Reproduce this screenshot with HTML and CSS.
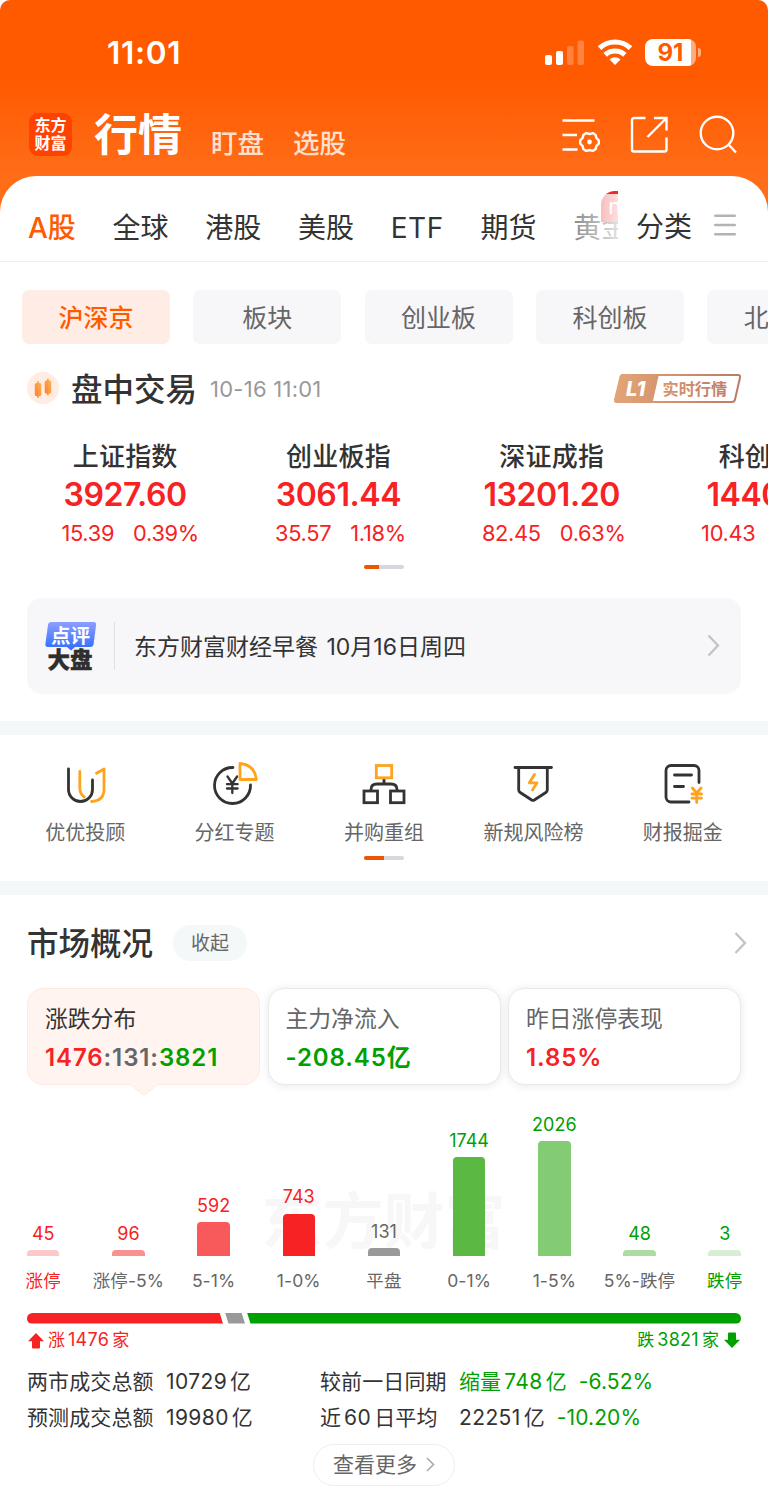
FILE: index.html
```html
<!DOCTYPE html>
<html lang="zh-CN">
<head>
  <meta charset="UTF-8">
  <meta name="viewport" content="width=device-width, initial-scale=1.0">
  <title>行情</title>
  <link rel="stylesheet" href="styles.css">
</head>
<body>
  <header class="header">
    <div class="status-bar">
      <span class="time">11:01</span>
      <div class="status-icons">
        <svg class="signal" width="39" height="25" viewBox="0 0 39 25" fill="#fff">
          <rect x="0" y="15" width="7" height="10" rx="2"/>
          <rect x="11" y="11" width="7" height="14" rx="2"/>
          <rect x="22" y="6" width="6.500" height="19" rx="2" opacity=".25"/>
          <rect x="32.500" y="0.500" width="6.500" height="24.500" rx="2" opacity=".25"/>
        </svg>
        <svg class="wifi" width="34" height="26" viewBox="0 0 34 26" fill="none" stroke="#fff" stroke-width="5.200">
          <path d="M1.500 9.200a22.500 22.500 0 0 1 31 0"/>
          <path d="M7.200 15.800a14.500 14.500 0 0 1 19.600 0"/>
          <path d="M11.500 20.600a7.600 7.600 0 0 1 11 0L17 26z" fill="#fff" stroke="none"/>
        </svg>
        <div class="battery"><span>91</span></div>
      </div>
    </div>
    <div class="nav-bar">
      <div class="logo">东方<br>财富</div>
      <h1 class="nav-title">行情</h1>
      <a class="nav-link">盯盘</a>
      <a class="nav-link">选股</a>
      <div class="nav-icons">
        <svg width="38" height="38" viewBox="0 0 38 38" fill="none" stroke="#fff" stroke-width="2.400">
          <path d="M.5 4.500h32M.5 19H15M.5 33.500h15"/>
          <path stroke-linejoin="round" transform="translate(27.500 26)" d="M9.300 -1.600V1.600L6.900 4L6.100 7.100L3.300 8.900L0 8L-3.300 8.900L-6.100 7.100L-6.900 4L-9.300 1.600V-1.600L-6.900 -4L-6.100 -7.100L-3.300 -8.900L0 -8L3.300 -8.900L6.100 -7.100L6.900 -4Z"/>
          <circle cx="27.500" cy="26" r="2.400" fill="#fff" stroke="none"/>
        </svg>
        <svg width="38" height="38" viewBox="0 0 38 38" fill="none" stroke="#fff" stroke-width="2.400">
          <path d="M15.500 2H4a2 2 0 0 0-2 2V33.500a2 2 0 0 0 2 2H34.500a2 2 0 0 0 2-2V21.500"/>
          <path d="M24 2h12.500V14.500M36.500 2L17.500 21"/>
        </svg>
        <svg width="40" height="40" viewBox="0 0 40 40" fill="none" stroke="#fff" stroke-width="2.400">
          <circle cx="19" cy="18" r="16.300"/>
          <path d="M30.500 29.500L38 37.500"/>
        </svg>
      </div>
    </div>
  </header>

  <main class="sheet">
    <nav class="tabs">
      <div class="tab-strip">
        <a class="tab active">A股</a>
        <a class="tab">全球</a>
        <a class="tab">港股</a>
        <a class="tab">美股</a>
        <a class="tab etf">ETF</a>
        <a class="tab">期货</a>
        <a class="tab">黄金<i class="new">new</i></a>
      </div>
      <a class="category">分类</a>
      <svg class="menu" width="22" height="22" viewBox="0 0 22 22" stroke="#b3b3b3" stroke-width="2.400" stroke-linecap="round">
        <path d="M1.200 1.800h19.600M1.200 11h19.600M1.200 20.200h19.600"/>
      </svg>
    </nav>

    <div class="chips">
      <a class="chip on">沪深京</a>
      <a class="chip">板块</a>
      <a class="chip">创业板</a>
      <a class="chip">科创板</a>
      <a class="chip">北交所</a>
    </div>

    <div class="session">
      <svg width="32" height="32" viewBox="0 0 32 32">
        <defs>
          <linearGradient id="candle" x1="0" y1="1" x2="1" y2="0">
            <stop offset="0" stop-color="#ff7f3a"/>
            <stop offset="1" stop-color="#ffb34d"/>
          </linearGradient>
        </defs>
        <circle cx="16" cy="16" r="16" fill="#ffece3"/>
        <g fill="url(#candle)">
          <rect x="7.800" y="11" width="6.500" height="13" rx="1.500"/>
          <rect x="10.200" y="9" width="1.800" height="17" rx=".9"/>
          <rect x="17.700" y="8.500" width="6.500" height="13" rx="1.500"/>
          <rect x="20.100" y="6.500" width="1.800" height="17" rx=".9"/>
        </g>
      </svg>
      <h2>盘中交易</h2>
      <time>10-16 11:01</time>
      <svg class="level" width="127" height="29" viewBox="0 0 127 29">
        <defs>
          <linearGradient id="bronze" gradientUnits="userSpaceOnUse" x1="0" y1="0" x2="127" y2="0">
            <stop offset="0" stop-color="#e3a577"/>
            <stop offset="1" stop-color="#bd7a63"/>
          </linearGradient>
        </defs>
        <path d="M9.500 1H124q2.600 0 2 2.500l-5 22q-.6 2.500-3 2.500H3q-2.600 0-2-2.500l5.500-22Q7 1 9.500 1z" fill="#fff" stroke="url(#bronze)" stroke-width="2"/>
        <path d="M9 0H45L38.500 29H3Q0 29 .6 26L5.500 3Q6.300 0 9 0z" fill="url(#bronze)"/>
        <text class="level-no" x="12" y="21.500">L1</text>
        <text class="level-text" x="48.500" y="20.500" fill="url(#bronze)">实时行情</text>
      </svg>
    </div>

    <div class="indices">
      <div class="index">
        <h3>上证指数</h3>
        <strong>3927.60</strong>
        <p><span>15.39</span><span>0.39%</span></p>
      </div>
      <div class="index">
        <h3>创业板指</h3>
        <strong>3061.44</strong>
        <p><span>35.57</span><span>1.18%</span></p>
      </div>
      <div class="index">
        <h3>深证成指</h3>
        <strong>13201.20</strong>
        <p><span>82.45</span><span>0.63%</span></p>
      </div>
      <div class="index">
        <h3>科创 50</h3>
        <strong>1440.21</strong>
        <p><span>10.43</span><span>0.73%</span></p>
      </div>
    </div>
    <div class="pager index-pager"><i></i></div>

    <div class="comment">
      <svg width="52" height="50" viewBox="0 0 52 50">
        <defs>
          <linearGradient id="bubble" x1="0" y1="0" x2="0" y2="1">
            <stop offset="0" stop-color="#8c9fff"/>
            <stop offset="1" stop-color="#2f6bff"/>
          </linearGradient>
        </defs>
        <path d="M6.500 1H48.500q3 0 2.600 3L48.600 23q-.4 3-3.400 3H30l-4 3.500L22 26H3q-3 0-2.600-3L3 4Q3.400 1 6.500 1z" fill="url(#bubble)"/>
        <text class="cm-top" x="6" y="21.500">点评</text>
        <text class="cm-bottom" x="2.500" y="47">大盘</text>
      </svg>
      <p>东方财富财经早餐 10月16日周四</p>
      <svg class="arrow" width="13" height="23" viewBox="0 0 13 23" fill="none" stroke="#c4c4c6" stroke-width="2.400">
        <path d="M1.500 1.500L11 11.500L1.500 21.500"/>
      </svg>
    </div>

    <div class="band"></div>

    <div class="shortcuts">
      <a class="shortcut">
        <svg width="48" height="48" viewBox="0 0 48 48">
          <path class="dk" d="M7.500 9v20.500a12 12 0 0 0 24 0V20"/>
          <path class="or" d="M18.800 11.500V28q0 6 4.500 9M35.500 13.300L43 9V29q0 12-12.500 12.500"/>
        </svg>
        优优投顾
      </a>
      <a class="shortcut">
        <svg width="48" height="48" viewBox="0 0 48 48">
          <path class="dk" d="M22 7.500a18 18 0 1 0 17.500 17.500"/>
          <path class="dk thin" d="M16.500 16.500l4.800 7 4.800-7M21.300 23.500V33M16 24.200h10.600M16 28.500h10.600"/>
          <path class="or" d="M29 3.500Q44 5 45.300 19.500H29z"/>
        </svg>
        分红专题
      </a>
      <a class="shortcut">
        <svg width="48" height="48" viewBox="0 0 48 48">
          <path class="dk" d="M24 18.500v5.500M11 30v-.5q0-5.500 6-5.500H31q6 0 6 5.500V30"/>
          <rect class="dk sq" x="4" y="31" width="13.500" height="11.700"/>
          <rect class="dk sq" x="30.500" y="31" width="13.500" height="11.700"/>
          <rect class="or sq" x="16.300" y="5.500" width="15.400" height="12.300"/>
        </svg>
        并购重组
      </a>
      <a class="shortcut">
        <svg width="48" height="48" viewBox="0 0 48 48">
          <path class="dk" d="M6 7.500h36.500M9.700 7.500V30q0 1.500 1.500 2.500l11.500 7.500q1.300.8 2.600 0l11.500-7.500q1.500-1 1.500-2.500V7.500"/>
          <path class="or" d="M25.500 14.500L20.300 22.800H28L23.500 30"/>
        </svg>
        新规风险榜
      </a>
      <a class="shortcut">
        <svg width="48" height="48" viewBox="0 0 48 48">
          <path class="dk" d="M40 22.500V10.500a5 5 0 0 0-5-5H12a5 5 0 0 0-5 5V37a5 5 0 0 0 5 5H30M15.500 15h17M15.500 26.500h9"/>
          <path class="or" d="M33.300 28l4.400 5 4.400-5M37.700 33v9.500M33 34h9.500M33 38.200h9.500"/>
        </svg>
        财报掘金
      </a>
    </div>
    <div class="pager shortcut-pager"><i></i></div>

    <div class="band"></div>

    <section class="market">
      <div class="market-head">
        <h2>市场概况</h2>
        <a class="fold">收起</a>
        <svg class="arrow" width="13" height="23" viewBox="0 0 13 23" fill="none" stroke="#c4c4c6" stroke-width="2.400">
          <path d="M1.500 1L11 11L1.500 21"/>
        </svg>
      </div>

      <div class="cards">
        <div class="card current">
          <h4>涨跌分布</h4>
          <p><b class="up">1476</b><b class="flat">:131:</b><b class="down">3821</b></p>
          <svg class="pointer" width="28" height="12" viewBox="0 0 28 12">
            <path d="M0 0L11.500 9.500Q14 11.500 16.500 9.500L28 0z" fill="#fff4f0"/>
            <path d="M1.200 1L11.500 9.500Q14 11.500 16.500 9.500L26.800 1" fill="none" stroke="#ffe8dd"/>
          </svg>
        </div>
        <div class="card">
          <h4>主力净流入</h4>
          <p class="down">-208.45亿</p>
        </div>
        <div class="card">
          <h4>昨日涨停表现</h4>
          <p class="up">1.85%</p>
        </div>
      </div>

      <div class="chart">
        <div class="watermark">东方财富</div>
        <div class="col up"><span>45</span><i class="bar r1" style="height:5.5px"></i></div>
        <div class="col up"><span>96</span><i class="bar r2" style="height:5.5px"></i></div>
        <div class="col up"><span>592</span><i class="bar r3" style="height:33.5px"></i></div>
        <div class="col up"><span>743</span><i class="bar r4" style="height:42px"></i></div>
        <div class="col flat"><span>131</span><i class="bar mid" style="height:7.5px"></i></div>
        <div class="col down"><span>1744</span><i class="bar g4" style="height:98.5px"></i></div>
        <div class="col down"><span>2026</span><i class="bar g3" style="height:114.5px"></i></div>
        <div class="col down"><span>48</span><i class="bar g2" style="height:5.5px"></i></div>
        <div class="col down"><span>3</span><i class="bar g1" style="height:5.5px"></i></div>
      </div>
      <div class="axis">
        <span class="up">涨停</span>
        <span>涨停-5%</span>
        <span>5-1%</span>
        <span>1-0%</span>
        <span>平盘</span>
        <span>0-1%</span>
        <span>1-5%</span>
        <span>5%-跌停</span>
        <span class="down">跌停</span>
      </div>

      <div class="ratio">
        <i class="ratio-up"></i>
        <i class="ratio-flat"></i>
        <i class="ratio-down"></i>
      </div>
      <div class="counts">
        <span class="up">
          <svg width="16" height="16" viewBox="0 0 16 16" fill="#f62223"><path d="M8 0l8 8.200h-4V14.500q0 1-1 1H5q-1 0-1-1V8.200H0z"/></svg>
          涨<em>1476</em>家
        </span>
        <span class="down">
          跌<em>3821</em>家
          <svg width="16" height="16" viewBox="0 0 16 16" fill="#00a000"><path d="M8 16l8-8.200h-4V1.500q0-1-1-1H5q-1 0-1 1v6.300H0z"/></svg>
        </span>
      </div>

      <div class="stats">
        <span>两市成交总额</span>
        <span><em>10729</em>亿</span>
        <span>较前一日同期</span>
        <span class="down">缩量<em class="mid-num">748</em>亿<b>-6.52%</b></span>
        <span>预测成交总额</span>
        <span><em>19980</em>亿</span>
        <span>近<em class="mid-num">60</em>日平均</span>
        <span><em>22251</em>亿<b class="down">-10.20%</b></span>
      </div>

      <a class="more">查看更多
        <svg width="9" height="15" viewBox="0 0 9 15" fill="none" stroke="#aaa" stroke-width="1.600"><path d="M1 1l6.500 6.500L1 14"/></svg>
      </a>
    </section>
  </main>
</body>
</html>
```

FILE: styles.css
```css
* {
  box-sizing: border-box;
  margin: 0;
  padding: 0;
}

body {
  width: 768px;
  height: 1488px;
  overflow: hidden;
  background: #fff;
  color: #333;
  font-family: Inter, "Noto Sans CJK SC", sans-serif;
}

h1, h2, h3, h4 {
  font-weight: 500;
}

i, em {
  font-style: normal;
}

svg {
  display: block;
  flex: none;
}

.up { color: #f62223; }
.down { color: #00a000; }
.flat { color: #666; }

/* header */
.header {
  height: 216px;
  border-radius: 10px 10px 0 0;
  background: linear-gradient(#ff5a00 78px, #ff6d19 175px);
  color: #fff;
}

.status-bar {
  display: flex;
  align-items: center;
  justify-content: space-between;
  height: 104px;
  padding: 0 67px 0 107px;
}

.time {
  font-size: 31.500px;
  font-weight: 600;
  letter-spacing: .7px;
}

.status-icons {
  display: flex;
  align-items: center;
}

.wifi {
  margin: 0 13px 0 14px;
}

.battery {
  position: relative;
  width: 51px;
  height: 27px;
  margin-right: 5px;
  border-radius: 8px;
  background: linear-gradient(90deg, #fff 46px, rgba(255, 255, 255, .5) 46px);
  color: #ff5a00;
  font-size: 24px;
  font-weight: 700;
  line-height: 27px;
  text-align: center;
}

.battery::after {
  content: "";
  position: absolute;
  left: 53px;
  top: 9px;
  width: 3px;
  height: 9px;
  border-radius: 0 3px 3px 0;
  background: rgba(255, 255, 255, .5);
}

.nav-bar {
  display: flex;
  align-items: center;
  height: 61px;
  padding: 0 30px 0 29px;
}

.logo {
  width: 43px;
  height: 43px;
  padding-top: 3px;
  border-radius: 9px;
  background: #ff4200;
  font-size: 16px;
  font-weight: 700;
  line-height: 18px;
  text-align: center;
}

.nav-title {
  margin: 0 29px 0 22px;
  font-size: 44px;
  font-weight: 600;
  line-height: 60px;
}

.nav-link {
  margin: 17px 29px 0 0;
  color: #ffe0cf;
  font-size: 26.500px;
  font-weight: 500;
  line-height: 36px;
}

.nav-icons {
  display: flex;
  align-items: center;
  gap: 30px;
  margin-left: auto;
}

/* sheet */
.sheet {
  height: 1313px;
  margin-top: -40.500px;
  position: relative;
  border-radius: 36px 36px 0 0;
  background: #fff;
}

.tabs {
  display: flex;
  align-items: center;
  height: 86.500px;
  border-bottom: 1.500px solid #eee;
  font-size: 28px;
  line-height: 40px;
}

.tab-strip {
  position: relative;
  display: flex;
  gap: 36.700px;
  width: 618px;
  height: 85px;
  padding: 32px 0 0 28px;
  overflow: hidden;
  white-space: nowrap;
}

.tab-strip::after {
  content: "";
  position: absolute;
  left: 560px;
  top: 18px;
  width: 58px;
  height: 66px;
  background: linear-gradient(90deg, rgba(255, 255, 255, .3), rgba(255, 255, 255, .85));
}

.tab {
  position: relative;
  flex: none;
}

.tab.etf {
  letter-spacing: .6px;
}

.tab.active {
  color: #ff5a00;
  font-weight: 500;
}

.tab.active::after {
  content: "";
  position: absolute;
  left: 12px;
  bottom: -14px;
  width: 25px;
  height: 4px;
  border-radius: 2px;
  background: #ff5a00;
}

.new {
  position: absolute;
  left: 28px;
  top: -17px;
  width: 50px;
  height: 31px;
  padding-left: 7px;
  border-radius: 14px 14px 14px 0;
  background: #ee2a2a;
  color: #fff;
  font-size: 22px;
  line-height: 30px;
}

.category {
  margin: 18px 22px 0 18px;
}

.menu {
  margin-top: 14px;
}

.chips {
  display: flex;
  gap: 23.300px;
  margin: 28px 0 0 22px;
  overflow: hidden;
}

.chip {
  flex: none;
  width: 148px;
  height: 54px;
  border-radius: 7px;
  background: #f7f7fa;
  color: #666;
  font-size: 25px;
  line-height: 57px;
  text-align: center;
}

.chip.on {
  background: #ffede5;
  color: #ff5a00;
  font-weight: 500;
}

.session {
  display: flex;
  align-items: center;
  height: 40px;
  margin: 24px 27px 0;
}

.session h2 {
  margin: 0 13px 0 12px;
  padding-top: 3px;
  font-size: 31.500px;
  line-height: 40px;
}

.session time {
  padding-top: 1px;
  color: #999;
  font-size: 22px;
  letter-spacing: .25px;
}

.level {
  margin-left: auto;
}

.level-no {
  fill: #fff;
  font-size: 20px;
  font-weight: 800;
  font-style: italic;
}

.level-text {
  font-size: 16.200px;
  font-weight: 700;
}

.indices {
  display: flex;
  margin: 30px 0 0 18.500px;
  overflow: hidden;
}

.index {
  flex: none;
  width: 213.300px;
  text-align: center;
  color: #f62223;
}

.index h3 {
  color: #333;
  font-size: 26px;
  line-height: 38px;
  letter-spacing: .2px;
}

.index strong {
  display: block;
  font-size: 32px;
  font-weight: 600;
  line-height: 38px;
  letter-spacing: -.4px;
}

.index p {
  display: flex;
  justify-content: center;
  gap: 19px;
  margin-left: 4px;
  font-size: 21.800px;
  line-height: 39px;
  letter-spacing: -.3px;
}

.index:first-child p,
.index:last-child p {
  margin-left: 10px;
}

.pager {
  width: 40px;
  height: 4px;
  margin: 0 auto;
  border-radius: 2px;
  background: #d5d9dd;
  overflow: hidden;
}

.pager i {
  display: block;
  width: 15px;
  height: 4px;
  background: #ee5500;
}

.index-pager {
  margin-top: 12px;
}

.comment {
  display: flex;
  align-items: center;
  height: 96px;
  margin: 28.500px 27px 27px;
  padding: 0 21px 0 18px;
  border-radius: 15px;
  background: #f7f7fa;
}

.comment p {
  margin-left: 17px;
  padding: 2px 0 0 19px;
  border-left: 1.500px solid #e2e2e5;
  font-size: 23px;
  line-height: 46px;
  word-spacing: 2px;
}

.comment .arrow {
  margin-left: auto;
}

.cm-top {
  fill: #fff;
  font-size: 19.500px;
  font-weight: 700;
}

.cm-bottom {
  fill: #2e2e2e;
  stroke: #2e2e2e;
  stroke-width: .4px;
  font-size: 22.500px;
  font-weight: 900;
}

.band {
  height: 14px;
  background: #f4f8f9;
}

.shortcuts {
  display: grid;
  grid-template-columns: repeat(5, 1fr);
  padding: 25px 10.500px 0;
}

.shortcut {
  color: #666;
  font-size: 20px;
  line-height: 29px;
  text-align: center;
}

.shortcut svg {
  margin: 0 auto 11px;
}

.dk, .or {
  fill: none;
  stroke: #333;
  stroke-width: 2.800;
  stroke-linecap: round;
  stroke-linejoin: round;
}

.or { stroke: #ffa31f; }
.thin { stroke-width: 2.300; }
.sq { stroke-linejoin: miter; }

.shortcut-pager {
  margin-top: 8.500px;
  margin-bottom: 21px;
}

.shortcut-pager i {
  width: 20px;
}

/* market overview */
.market {
  padding: 24px 27px 0;
}

.market-head {
  display: flex;
  align-items: center;
  height: 48px;
  margin-right: -6px;
}

.market-head h2 {
  padding-top: 2px;
  font-size: 31.500px;
  line-height: 48px;
}

.fold {
  width: 74px;
  height: 36px;
  margin: -1px 0 0 20px;
  border-radius: 18px;
  background: #f4f8f9;
  color: #666;
  font-size: 19px;
  line-height: 37px;
  text-align: center;
}

.market-head .arrow {
  margin-left: auto;
}

.cards {
  display: grid;
  grid-template-columns: repeat(3, 1fr);
  gap: 7.500px;
  margin-top: 21px;
}

.card {
  position: relative;
  height: 97px;
  padding: 15px 17px 0;
  border: 1px solid #e9e9e9;
  border-radius: 16px;
  background: #fff;
  box-shadow: 0 1px 10px rgba(0, 0, 0, .09);
}

.card.current {
  border-color: #ffe8dd;
  background: #fff4f0;
  box-shadow: none;
}

.card h4 {
  color: #666;
  font-size: 22.800px;
  font-weight: 400;
  line-height: 30px;
}

.card.current h4 {
  color: #333;
}

.card p {
  margin-top: 6px;
  font-size: 24px;
  font-weight: 600;
  line-height: 36px;
  letter-spacing: .9px;
}

.card b {
  font-weight: 600;
}

.pointer {
  position: absolute;
  left: 102px;
  top: 95px;
}

.chart, .axis {
  display: grid;
  grid-template-columns: repeat(9, 85.200px);
  margin: 0 -26.400px;
}

.chart {
  position: relative;
  height: 170.500px;
  align-items: end;
}

.watermark {
  position: absolute;
  left: 261px;
  bottom: -4px;
  color: #f7f7f7;
  font-size: 61px;
  font-weight: 700;
  line-height: 76px;
}

.col {
  position: relative;
  font-size: 18px;
  text-align: center;
}

.col span {
  display: block;
  line-height: 24px;
  margin-bottom: 4.500px;
}

.bar {
  display: block;
  width: 32.500px;
  margin: 0 auto;
  border-radius: 4px 4px 0 0;
}

.r1 { background: #fcc8c8; }
.r2 { background: #fa9191; }
.r3 { background: #f85a5c; }
.r4 { background: #f62223; }
.mid { background: #999; }
.g4 { background: #5ab843; }
.g3 { background: #84cc74; }
.g2 { background: #abdca1; }
.g1 { background: #d6eed1; }

.axis {
  margin-top: 13.500px;
  color: #666;
  font-size: 17.500px;
  line-height: 24px;
  letter-spacing: .1px;
  text-align: center;
}

.ratio {
  display: flex;
  height: 11px;
  margin-top: 19.500px;
  border-radius: 6px;
  overflow: hidden;
}

.ratio-up {
  width: 196px;
  background: #f62223;
  clip-path: polygon(0 0, 192.500px 0, 100% 100%, 0 100%);
}

.ratio-flat {
  width: 20px;
  margin: 0 2px;
  background: #999;
  clip-path: polygon(0 0, 16.500px 0, 100% 100%, 3.500px 100%);
}

.ratio-down {
  flex: 1;
  background: #00a000;
  clip-path: polygon(0 0, 100% 0, 100% 100%, 3.500px 100%);
}

.counts {
  display: flex;
  justify-content: space-between;
  margin-top: 4.500px;
  font-size: 17px;
  line-height: 24px;
}

.counts span {
  display: flex;
  align-items: center;
}

.counts em {
  margin: 0 3px;
  font-size: 18px;
  letter-spacing: .3px;
}

.counts .up svg {
  margin: 1px 4px 0 1px;
}

.counts .down svg {
  margin: 0 1px 0 5px;
}

.stats {
  display: grid;
  grid-template-columns: 139px 154px 139px 1fr;
  margin-top: 12px;
  font-size: 21px;
  line-height: 36px;
  letter-spacing: .1px;
  white-space: nowrap;
}

.stats em {
  margin-right: 3px;
  letter-spacing: .4px;
}

.stats .mid-num {
  margin-left: 3px;
}

.stats b {
  margin-left: 12px;
  font-weight: 400;
}

.more {
  display: flex;
  align-items: center;
  justify-content: center;
  gap: 9px;
  width: 142px;
  height: 42px;
  margin: 7.500px auto 0;
  border: 1.500px solid #eee;
  border-radius: 21px;
  color: #666;
  font-size: 21px;
  line-height: 38px;
}
```
